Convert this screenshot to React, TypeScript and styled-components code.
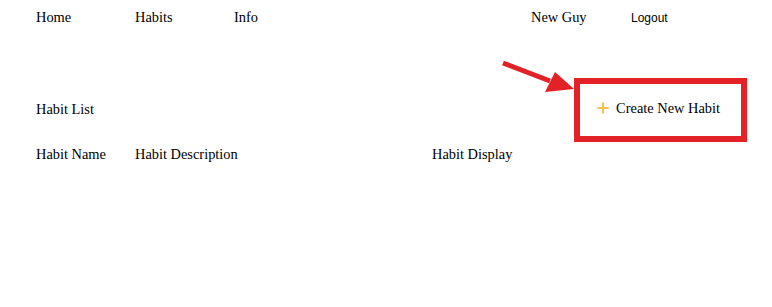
import React from "react";
import styled, { createGlobalStyle } from "styled-components";

const GlobalStyle = createGlobalStyle`
  body {
    margin: 0;
    background: #ffffff;
    color: #000000;
    font-family: "Liberation Serif", "Times New Roman", serif;
    font-size: 14.4px;
    line-height: 16px;
  }
`;

const RED = "#e32227";

const Page = styled.div`
  position: relative;
  width: 772px;
  height: 307px;
  padding: 9px 36px 0 36px;
  box-sizing: border-box;
`;

const Nav = styled.nav`
  display: grid;
  grid-template-columns: 99px 99px 297px 100px auto;
  align-items: baseline;
`;

const NavLink = styled.a`
  color: #000000;
  text-decoration: none;
  cursor: pointer;
`;

const LogoutButton = styled.button`
  justify-self: start;
  padding: 0;
  border: none;
  background: none;
  font-family: "Liberation Sans", Arial, sans-serif;
  font-size: 12px;
  color: #000000;
  cursor: pointer;
`;

const HeaderRow = styled.div`
  display: flex;
  align-items: center;
  justify-content: space-between;
  margin-top: 75px;
  padding-right: 16px;
`;

const Title = styled.div``;

const Highlight = styled.div`
  position: relative;

  &::after {
    content: "";
    position: absolute;
    left: -23px;
    right: -27px;
    top: -22px;
    bottom: -25px;
    border: 6px solid ${RED};
    pointer-events: none;
  }
`;

const CreateButton = styled.button`
  display: inline-flex;
  align-items: center;
  gap: 7px;
  padding: 0;
  border: none;
  background: none;
  font: inherit;
  color: #000000;
  cursor: pointer;
`;

const TableHead = styled.div`
  display: grid;
  grid-template-columns: 99px 297px auto;
  margin-top: 29px;
`;

const Arrow = styled.svg`
  position: absolute;
  left: 498px;
  top: 56px;
  pointer-events: none;
`;

const PlusIcon = () => (
  <svg width="12" height="12" viewBox="0 0 12 12">
    <path d="M6 0.5V11.5M0.5 6H11.5" stroke="#f2c14e" strokeWidth="2" />
  </svg>
);

export default function App() {
  return (
    <>
      <GlobalStyle />
      <Page>
        <Nav>
          <NavLink>Home</NavLink>
          <NavLink>Habits</NavLink>
          <NavLink>Info</NavLink>
          <span>New Guy</span>
          <LogoutButton>Logout</LogoutButton>
        </Nav>

        <HeaderRow>
          <Title>Habit List</Title>
          <Highlight>
            <CreateButton>
              <PlusIcon />
              Create New Habit
            </CreateButton>
          </Highlight>
        </HeaderRow>

        <TableHead>
          <span>Habit Name</span>
          <span>Habit Description</span>
          <span>Habit Display</span>
        </TableHead>

        {/* annotation arrow pointing at the button */}
        <Arrow width="82" height="42" viewBox="0 0 82 42">
          <line x1="5" y1="7" x2="52" y2="25" stroke={RED} strokeWidth="5" />
          <polygon points="57,16 47,36 76,33" fill={RED} />
        </Arrow>
      </Page>
    </>
  );
}
